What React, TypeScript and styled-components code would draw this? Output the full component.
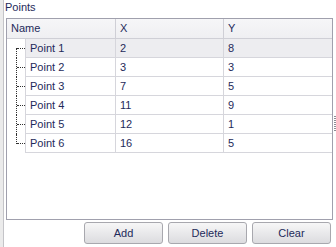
import styled, { createGlobalStyle } from "styled-components";

const GlobalStyle = createGlobalStyle`
  html, body {
    margin: 0;
    padding: 0;
    background: #ffffff;
  }
  body {
    font-family: "Liberation Sans", Arial, sans-serif;
    font-size: 11px;
  }
`;

const points = [
  { name: "Point 1", x: 2, y: 8 },
  { name: "Point 2", x: 3, y: 3 },
  { name: "Point 3", x: 7, y: 5 },
  { name: "Point 4", x: 11, y: 9 },
  { name: "Point 5", x: 12, y: 1 },
  { name: "Point 6", x: 16, y: 5 },
];

function App() {
  return (
    <>
      <GlobalStyle />
      <Page>
        <LeftStrip />
        <Panel>
          <Caption>Points</Caption>
          <Grid>
            <HeaderRow>
              <HeaderCell $width={108}>Name</HeaderCell>
              <HeaderCell $width={108} $divider>
                X
              </HeaderCell>
              <HeaderCell $grow $divider>
                Y
              </HeaderCell>
            </HeaderRow>
            {points.map((p, index) => (
              <Row key={p.name}>
                <TreeCell
                  $first={index === 0}
                  $last={index === points.length - 1}
                />
                <Cell $width={90} $divider $selected={index === 0}>
                  {p.name}
                </Cell>
                <Cell $width={108} $divider $selected={index === 0}>
                  {p.x}
                </Cell>
                <Cell $grow $divider $selected={index === 0}>
                  {p.y}
                </Cell>
              </Row>
            ))}
          </Grid>
          <ButtonBar>
            <Button>Add</Button>
            <Button>Delete</Button>
            <Button>Clear</Button>
          </ButtonBar>
        </Panel>
        <Grip>
          <GripDots />
        </Grip>
      </Page>
    </>
  );
}

const Page = styled.div`
  display: flex;
  width: 336px;
  height: 247px;
  overflow: hidden;
`;

const LeftStrip = styled.div`
  width: 3px;
  background: #ebebeb;
  border-right: 1px solid #c4c4c8;
`;

const Panel = styled.div`
  display: flex;
  flex-direction: column;
  width: 330px;
`;

const Caption = styled.div`
  height: 18px;
  line-height: 15px;
  padding-left: 1px;
  color: #1e2a5a;
`;

const Grid = styled.div`
  margin-left: 2px;
  width: 325px;
  height: 200px;
  border: 1px solid #a0a0ad;
  display: flex;
  flex-direction: column;
`;

const HeaderRow = styled.div`
  display: flex;
  height: 19px;
  border-bottom: 1px solid #cfcfd6;
  background: linear-gradient(#f6f6f8, #efeff2);
`;

const HeaderCell = styled.div<{ $width?: number; $grow?: boolean; $divider?: boolean }>`
  box-sizing: border-box;
  width: ${({ $width }) => ($width ? `${$width}px` : "auto")};
  flex: ${({ $grow }) => ($grow ? "1" : "none")};
  border-left: ${({ $divider }) => ($divider ? "1px solid #cfcfd6" : "none")};
  padding-left: ${({ $divider }) => ($divider ? "4px" : "4px")};
  line-height: 19px;
  color: #1e2a5a;
`;

const Row = styled.div`
  display: flex;
  height: 19px;
`;

const TreeCell = styled.div<{ $first: boolean; $last: boolean }>`
  position: relative;
  width: 18px;
  flex: none;

  &::before {
    content: "";
    position: absolute;
    left: 9px;
    top: ${({ $first }) => ($first ? "9px" : "0")};
    height: ${({ $first, $last }) =>
      $first ? "10px" : $last ? "10px" : "19px"};
    border-left: 1px dotted #303030;
  }

  &::after {
    content: "";
    position: absolute;
    left: 10px;
    top: 9px;
    width: 8px;
    border-top: 1px dotted #303030;
  }
`;

const Cell = styled.div<{
  $width?: number;
  $grow?: boolean;
  $divider?: boolean;
  $selected?: boolean;
}>`
  box-sizing: border-box;
  width: ${({ $width }) => ($width ? `${$width}px` : "auto")};
  flex: ${({ $grow }) => ($grow ? "1" : "none")};
  border-left: ${({ $divider }) => ($divider ? "1px solid #d6d6dc" : "none")};
  border-bottom: 1px solid #d6d6dc;
  padding-left: 4px;
  line-height: 18px;
  color: #1e2a5a;
  background: ${({ $selected }) => ($selected ? "#ededf0" : "#ffffff")};
`;

const ButtonBar = styled.div`
  display: flex;
  justify-content: flex-end;
  gap: 5px;
  margin-top: 2px;
  padding-right: 3px;
`;

const Button = styled.button`
  box-sizing: border-box;
  width: 79px;
  height: 22px;
  padding: 0;
  border: 1px solid #a8a8ae;
  border-radius: 3px;
  background: linear-gradient(#f7f7f7, #e9e9eb 50%, #dcdcdf);
  font-family: "Liberation Sans", Arial, sans-serif;
  font-size: 11px;
  color: #1e2a5a;
`;

const Grip = styled.div`
  flex: 1;
  display: flex;
  align-items: flex-start;
  justify-content: flex-end;
`;

const GripDots = styled.div`
  margin-top: 116px;
  width: 2px;
  height: 15px;
  background: repeating-linear-gradient(
    #8c8c94 0,
    #8c8c94 1px,
    transparent 1px,
    transparent 2px
  );
`;

export default App;
